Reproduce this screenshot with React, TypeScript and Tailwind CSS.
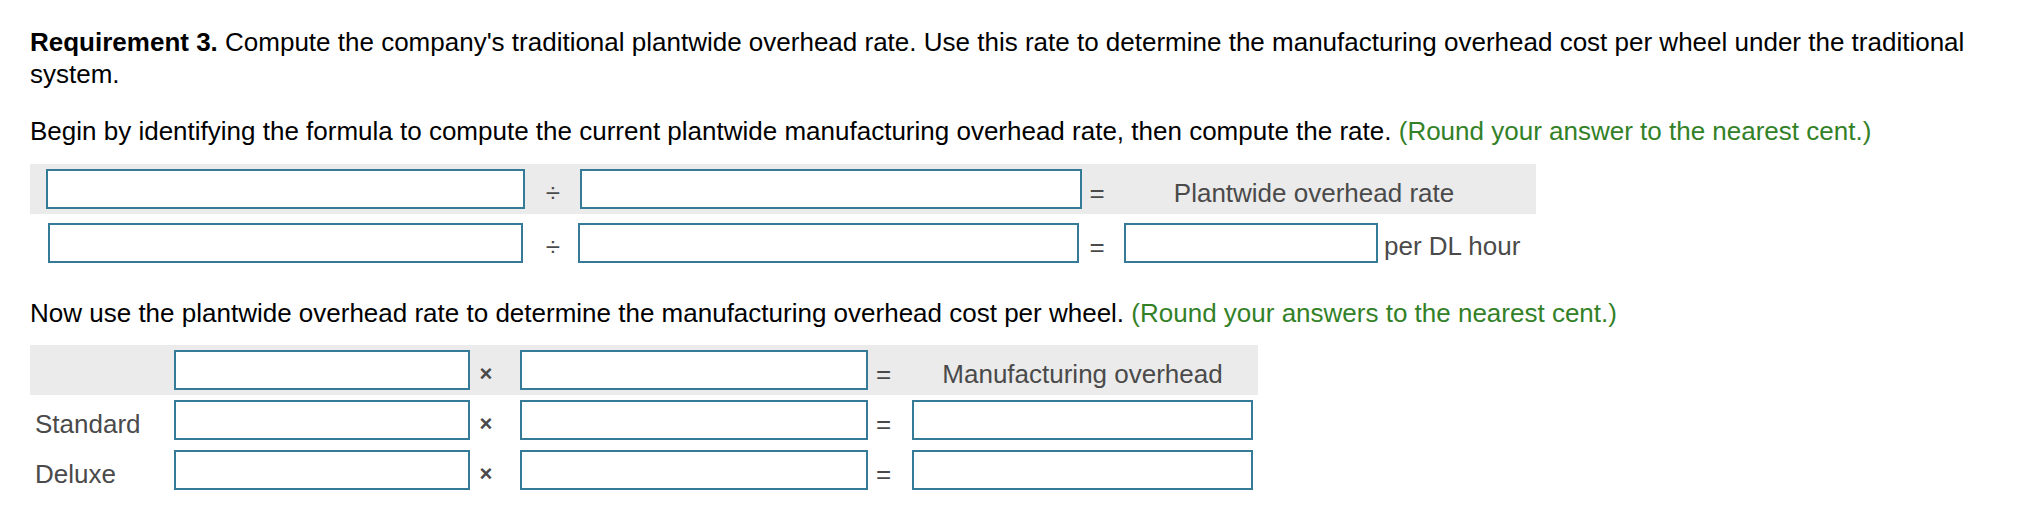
const boxCls = 'block h-[40px] border-2 border-[#357a97] bg-white'

function Box({ w, className = '' }: { w: string; className?: string }) {
  return <div className={`${boxCls} ${w} ${className}`} />
}

function Sign({ children, bold }: { children: string; bold?: boolean }) {
  return (
    <span className={`pt-[8px] text-[#4a4a4a] text-center ${bold ? 'font-bold text-[22px]' : ''}`}>
      {children}
    </span>
  )
}

function RateTable() {
  return (
    <div className="mt-[17px] w-[1506px] text-[#4a4a4a]">
      {/* header row */}
      <div className="grid grid-cols-[510px_26px_522px_18px_430px] items-center h-[50px] bg-[#ebebeb]">
        <Box w="w-[479px]" className="ml-[16px]" />
        <Sign>÷</Sign>
        <Box w="w-[502px]" className="ml-[14px]" />
        <Sign>=</Sign>
        <div className="pt-[8px] text-center pr-[14px]">Plantwide overhead rate</div>
      </div>
      {/* value row */}
      <div className="grid grid-cols-[510px_26px_522px_18px_430px] items-center h-[50px] mt-[4px]">
        <Box w="w-[475px]" className="ml-[18px]" />
        <Sign>÷</Sign>
        <Box w="w-[501px]" className="ml-[12px]" />
        <Sign>=</Sign>
        <div className="flex items-center">
          <Box w="w-[254px]" className="ml-[18px]" />
          <span className="ml-[6px] pt-[6px]">per DL hour</span>
        </div>
      </div>
    </div>
  )
}

function WheelRow({ label, head }: { label?: string; head?: boolean }) {
  return (
    <div
      className={`grid grid-cols-[144px_296px_32px_366px_31px_359px] items-center h-[50px] ${
        head ? 'bg-[#ebebeb]' : ''
      }`}
    >
      <div className="pl-[5px] pt-[8px]">{label}</div>
      <Box w="w-[296px]" />
      <Sign bold>×</Sign>
      <Box w="w-[348px]" className="ml-[18px]" />
      <Sign>=</Sign>
      {head ? (
        <div className="pt-[8px] text-center pl-[8px]">Manufacturing overhead</div>
      ) : (
        <Box w="w-[341px]" className="ml-[13px]" />
      )}
    </div>
  )
}

export default function App() {
  return (
    <div className="min-h-[524px] bg-white pl-[30px] pt-[26px] font-['Liberation_Sans',Arial,sans-serif] text-[26px] leading-[32px] text-black">
      <p className="w-[1985px]">
        <b>Requirement 3.</b> Compute the company's traditional plantwide overhead rate. Use
        this rate to determine the manufacturing overhead cost per wheel under the traditional
        system.
      </p>
      <p className="mt-[25px]">
        Begin by identifying the formula to compute the current plantwide manufacturing overhead
        rate, then compute the rate.{' '}
        <span className="text-[#338127]">(Round your answer to the nearest cent.)</span>
      </p>
      <RateTable />
      <p className="mt-[29px]">
        Now use the plantwide overhead rate to determine the manufacturing overhead cost per
        wheel. <span className="text-[#338127]">(Round your answers to the nearest cent.)</span>
      </p>
      <div className="mt-[16px] w-[1228px] text-[#4a4a4a]">
        <WheelRow head />
        <WheelRow label="Standard" />
        <WheelRow label="Deluxe" />
      </div>
    </div>
  )
}
